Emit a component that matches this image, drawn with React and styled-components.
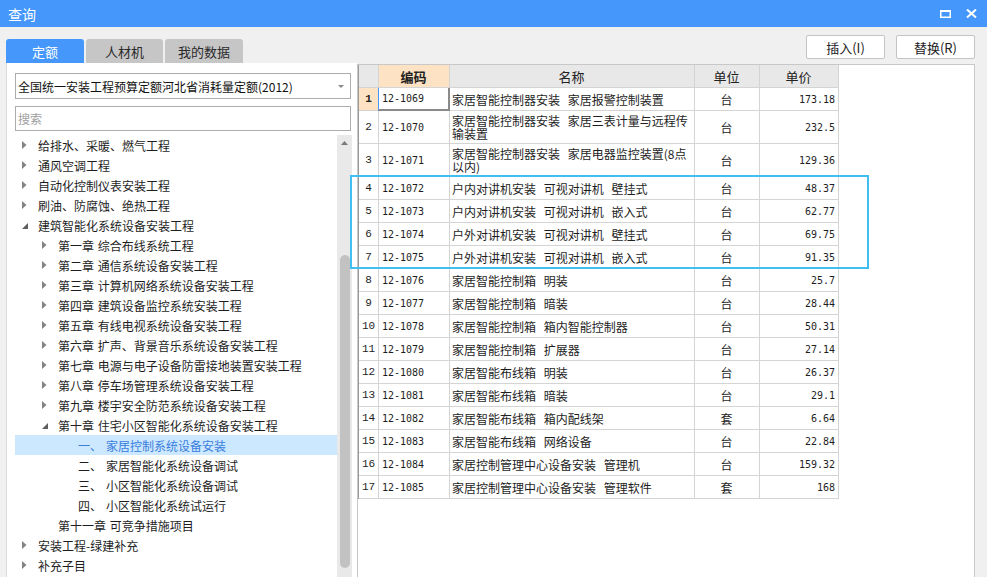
import React from "react";
import styled, { createGlobalStyle } from "styled-components";

const GlobalStyle = createGlobalStyle`
  body {
    margin: 0;
    overflow: hidden;
    font-family: "Noto Sans CJK SC", "Liberation Sans", sans-serif;
    color: #1e1e1e;
  }
`;

const Window = styled.div`
  width: 987px;
  height: 577px;
  background: #f0f0f0;
  display: flex;
  flex-direction: column;
  overflow: hidden;
`;

const TitleBar = styled.div`
  height: 27px;
  flex: none;
  background: #4597fc;
  display: flex;
  align-items: center;
  padding: 0 10px 0 8px;
  color: #fff;
`;

const Title = styled.span`
  font-size: 14px;
  flex: 1;
`;

const TitleButtons = styled.div`
  display: flex;
  align-items: center;
  gap: 15px;
`;

const Main = styled.div`
  flex: 1;
  min-height: 0;
  display: flex;
  padding: 0 11px 0 6px;
`;

const LeftCol = styled.div`
  width: 351px;
  flex: none;
  display: flex;
  flex-direction: column;
  padding-top: 12px;
`;

const Tabs = styled.div`
  display: flex;
  gap: 2px;
  height: 24px;
  flex: none;
`;

const Tab = styled.div`
  width: ${p => p.w}px;
  display: flex;
  align-items: center;
  justify-content: center;
  font-size: 13px;
  border-radius: 3px 3px 0 0;
  background: ${p => (p.active ? "#4597fc" : "#c6c6c6")};
  color: ${p => (p.active ? "#fff" : "#2a2a2a")};
`;

const LeftPanel = styled.div`
  flex: 1;
  min-height: 0;
  background: #fff;
  border-left: 1px solid #dcdcdc;
  padding: 10px 5px 0 8px;
  display: flex;
  flex-direction: column;
`;

const Combo = styled.div`
  height: 24px;
  margin-right: 1px;
  border: 1px solid #acacac;
  display: flex;
  align-items: center;
  padding: 0 6px 0 2px;
  font-size: 12px;
  color: #111;
`;

const ComboText = styled.span`
  flex: 1;
`;

const Search = styled.div`
  height: 23px;
  margin: 7px 1px 0 0;
  border: 1px solid #acacac;
  display: flex;
  align-items: center;
  padding-left: 2px;
  font-size: 12px;
  color: #a0a0a0;
`;

const TreeWrap = styled.div`
  flex: 1;
  min-height: 0;
  margin-top: 4px;
  display: flex;
`;

const TreeList = styled.div`
  flex: 1;
  overflow: hidden;
`;

const TreeRow = styled.div`
  height: 20px;
  display: flex;
  align-items: center;
  padding-left: ${p => p.level * 20}px;
  font-size: 12px;
  white-space: pre;
  word-spacing: 1px;
  background: ${p => (p.selected ? "#cce8ff" : "transparent")};
  color: ${p => (p.selected ? "#3a7ddc" : "#1e1e1e")};
`;

const ArrowBox = styled.span`
  width: 23px;
  flex: none;
  display: flex;
  align-items: center;
  padding-left: 7px;
  box-sizing: border-box;
`;

const Prefix = styled.span`
  width: 28px;
  flex: none;
`;

const ScrollBar = styled.div`
  width: 15px;
  flex: none;
  background: #e9e9e9;
  display: flex;
  flex-direction: column;
  align-items: center;
`;

const ScrollArrow = styled.div`
  height: 16px;
  display: flex;
  align-items: center;
  justify-content: center;
`;

const Thumb = styled.div`
  width: 10px;
  height: 313px;
  margin-top: 104px;
  border-radius: 5px;
  background: #c2c2c2;
`;

const RightCol = styled.div`
  flex: 1;
  display: flex;
  flex-direction: column;
`;

const ButtonBar = styled.div`
  display: flex;
  justify-content: flex-end;
  gap: 11px;
  padding: 8px 1px 5px 0;
`;

const Button = styled.div`
  width: 77px;
  height: 22px;
  border: 1px solid #c4c4c4;
  border-radius: 2px;
  background: #fff;
  display: flex;
  align-items: center;
  justify-content: center;
  font-size: 13px;
  color: #222;
`;

const Pane = styled.div`
  flex: 1;
  position: relative;
  background: #fff;
  border: 1px solid #c8c8c8;
  border-bottom: none;
  margin-right: 1px;
`;

const Grid = styled.div`
  display: flex;
  flex-direction: column;
  width: 481px;
  border-left: 1px solid #9a9a9a;
`;

const Row = styled.div`
  display: grid;
  grid-template-columns: 20px 71px 245px 65px 79px;
  height: ${p => p.h}px;
`;

const Cell = styled.div`
  border-right: 1px solid #d4d4d4;
  border-bottom: 1px solid #d4d4d4;
  display: flex;
  align-items: center;
  justify-content: ${p => p.align || "flex-start"};
  padding: 0 3px 0 2px;
  font-size: 12px;
  line-height: 13px;
  word-spacing: 5px;
  overflow: hidden;
  white-space: nowrap;
`;

const NameCell = styled(Cell)`
  white-space: normal;
  word-break: break-all;
`;

const HeadCell = styled(Cell)`
  justify-content: center;
  font-size: 13px;
  background: ${p => (p.hot ? "#fde3c3" : "#e8e8e8")};
  font-weight: ${p => (p.hot ? 700 : 400)};
  color: #222;
`;

const NumCell = styled(Cell)`
  justify-content: center;
  padding: 0;
  font-family: "Liberation Mono", monospace;
  font-size: 11px;
  background: ${p => (p.hot ? "#fde3c3" : "#fff")};
  font-weight: ${p => (p.hot ? 700 : 400)};
`;

const CodeCell = styled(Cell)`
  font-family: "DejaVu Sans Mono", monospace;
  font-size: 10px;
  padding-left: 3px;
  ${p =>
    p.focus &&
    `border-left: 1px solid #4597fc; border-right: 2px solid #8a8a8a; border-bottom: 2px solid #8a8a8a; margin-left: -1px;`}
`;

const PriceCell = styled(Cell)`
  justify-content: flex-end;
  font-family: "DejaVu Sans Mono", monospace;
  font-size: 10px;
`;

const Highlight = styled.div`
  position: absolute;
  left: -8px;
  top: 110px;
  width: 515px;
  height: 90px;
  border: 2px solid #40bff0;
  pointer-events: none;
`;

const RightArrow = () => (
  <svg width="5" height="8" viewBox="0 0 5 8">
    <polygon points="0,0 4.5,4 0,8" fill="#838383" />
  </svg>
);

const DownArrow = () => (
  <svg width="6" height="8" viewBox="0 0 6 8">
    <polygon points="6,2 6,8 0,8" fill="#5e5e5e" />
  </svg>
);

const tree = [
  { level: 0, arrow: "r", label: "给排水、采暖、燃气工程" },
  { level: 0, arrow: "r", label: "通风空调工程" },
  { level: 0, arrow: "r", label: "自动化控制仪表安装工程" },
  { level: 0, arrow: "r", label: "刷油、防腐蚀、绝热工程" },
  { level: 0, arrow: "d", label: "建筑智能化系统设备安装工程" },
  { level: 1, arrow: "r", label: "第一章 综合布线系统工程" },
  { level: 1, arrow: "r", label: "第二章 通信系统设备安装工程" },
  { level: 1, arrow: "r", label: "第三章 计算机网络系统设备安装工程" },
  { level: 1, arrow: "r", label: "第四章 建筑设备监控系统安装工程" },
  { level: 1, arrow: "r", label: "第五章 有线电视系统设备安装工程" },
  { level: 1, arrow: "r", label: "第六章 扩声、背景音乐系统设备安装工程" },
  { level: 1, arrow: "r", label: "第七章 电源与电子设备防雷接地装置安装工程" },
  { level: 1, arrow: "r", label: "第八章 停车场管理系统设备安装工程" },
  { level: 1, arrow: "r", label: "第九章 楼宇安全防范系统设备安装工程" },
  { level: 1, arrow: "d", label: "第十章 住宅小区智能化系统设备安装工程" },
  { level: 2, prefix: "一、", label: "家居控制系统设备安装", selected: true },
  { level: 2, prefix: "二、", label: "家居智能化系统设备调试" },
  { level: 2, prefix: "三、", label: "小区智能化系统设备调试" },
  { level: 2, prefix: "四、", label: "小区智能化系统试运行" },
  { level: 1, label: "第十一章 可竞争措施项目" },
  { level: 0, arrow: "r", label: "安装工程-绿建补充" },
  { level: 0, arrow: "r", label: "补充子目" },
  { level: 0, arrow: "r", label: "" },
];

const rows = [
  ["12-1069", "家居智能控制器安装 家居报警控制装置", "台", "173.18", 23],
  ["12-1070", "家居智能控制器安装 家居三表计量与远程传输装置", "台", "232.5", 33],
  ["12-1071", "家居智能控制器安装 家居电器监控装置(8点以内)", "台", "129.36", 33],
  ["12-1072", "户内对讲机安装 可视对讲机 壁挂式", "台", "48.37"],
  ["12-1073", "户内对讲机安装 可视对讲机 嵌入式", "台", "62.77"],
  ["12-1074", "户外对讲机安装 可视对讲机 壁挂式", "台", "69.75"],
  ["12-1075", "户外对讲机安装 可视对讲机 嵌入式", "台", "91.35"],
  ["12-1076", "家居智能控制箱 明装", "台", "25.7"],
  ["12-1077", "家居智能控制箱 暗装", "台", "28.44"],
  ["12-1078", "家居智能控制箱 箱内智能控制器", "台", "50.31"],
  ["12-1079", "家居智能控制箱 扩展器", "台", "27.14"],
  ["12-1080", "家居智能布线箱 明装", "台", "26.37"],
  ["12-1081", "家居智能布线箱 暗装", "台", "29.1"],
  ["12-1082", "家居智能布线箱 箱内配线架", "套", "6.64"],
  ["12-1083", "家居智能布线箱 网络设备", "台", "22.84"],
  ["12-1084", "家居控制管理中心设备安装 管理机", "台", "159.32"],
  ["12-1085", "家居控制管理中心设备安装 管理软件", "套", "168"],
];

export default function App() {
  return (
    <Window>
      <GlobalStyle />
      <TitleBar>
        <Title>查询</Title>
        <TitleButtons>
          <svg width="11" height="8" viewBox="0 0 11 8">
            <rect x="0.75" y="1" width="9.5" height="6.25" fill="none" stroke="#fff" strokeWidth="1.5" />
            <rect x="0" y="0" width="11" height="2" fill="#fff" />
          </svg>
          <svg width="11" height="9" viewBox="0 0 11 9">
            <path d="M1 0.5 L10 8.5 M10 0.5 L1 8.5" stroke="#fff" strokeWidth="2" />
          </svg>
        </TitleButtons>
      </TitleBar>
      <Main>
        <LeftCol>
          <Tabs>
            <Tab w={78} active>定额</Tab>
            <Tab w={77}>人材机</Tab>
            <Tab w={78}>我的数据</Tab>
          </Tabs>
          <LeftPanel>
            <Combo>
              <ComboText>全国统一安装工程预算定额河北省消耗量定额(2012)</ComboText>
              <svg width="6" height="3" viewBox="0 0 6 3">
                <polygon points="0,0 6,0 3,3" fill="#8a8a8a" />
              </svg>
            </Combo>
            <Search>搜索</Search>
            <TreeWrap>
              <TreeList>
                {tree.map((t, i) => (
                  <TreeRow key={i} level={t.level} selected={t.selected}>
                    <ArrowBox>
                      {t.arrow === "r" && <RightArrow />}
                      {t.arrow === "d" && <DownArrow />}
                    </ArrowBox>
                    {t.prefix && <Prefix>{t.prefix}</Prefix>}
                    {t.label}
                  </TreeRow>
                ))}
              </TreeList>
              <ScrollBar>
                <ScrollArrow>
                  <svg width="7" height="4" viewBox="0 0 7 4">
                    <polygon points="0,4 7,4 3.5,0" fill="#7a7a7a" />
                  </svg>
                </ScrollArrow>
                <Thumb />
              </ScrollBar>
            </TreeWrap>
          </LeftPanel>
        </LeftCol>
        <RightCol>
          <ButtonBar>
            <Button>插入(I)</Button>
            <Button>替换(R)</Button>
          </ButtonBar>
          <Pane>
            <Grid>
              <Row h={23}>
                <HeadCell />
                <HeadCell hot>编码</HeadCell>
                <HeadCell>名称</HeadCell>
                <HeadCell>单位</HeadCell>
                <HeadCell>单价</HeadCell>
              </Row>
              {rows.map((r, i) => (
                <Row key={r[0]} h={r[4] || 23}>
                  <NumCell hot={i === 0}>{i + 1}</NumCell>
                  <CodeCell focus={i === 0}>{r[0]}</CodeCell>
                  <NameCell>{r[1]}</NameCell>
                  <Cell align="center">{r[2]}</Cell>
                  <PriceCell>{r[3]}</PriceCell>
                </Row>
              ))}
            </Grid>
            <Highlight />
          </Pane>
        </RightCol>
      </Main>
    </Window>
  );
}
